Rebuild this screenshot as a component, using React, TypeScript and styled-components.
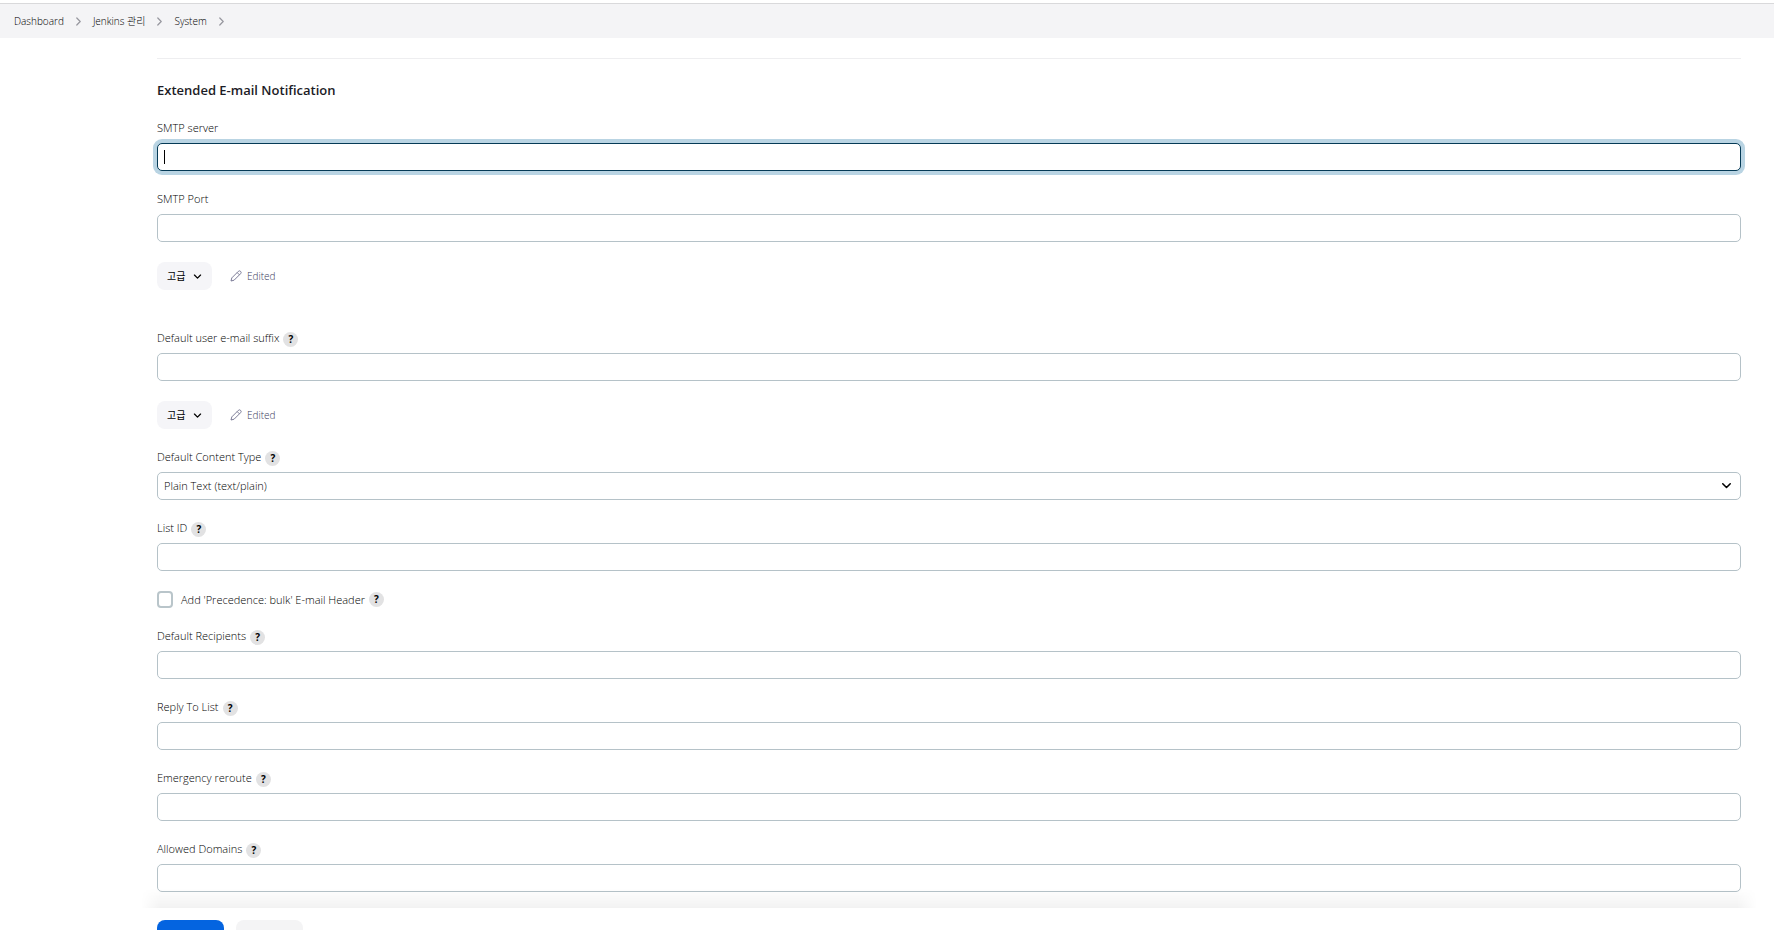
import React from "react";
import styled, { createGlobalStyle } from "styled-components";

const GlobalStyle = createGlobalStyle`
  *, *::before, *::after { box-sizing: border-box; }
  body {
    margin: 0;
    background: #fff;
    color: #000;
    font-family: "Open Sans", "Noto Sans CJK KR", sans-serif;
    font-size: 11px;
    font-weight: 300;
    line-height: 16px;
  }
  button, input, select { font: inherit; color: inherit; }
`;

const Shell = styled.div`
  display: flex;
  flex-direction: column;
  height: 100vh;
  overflow: hidden;
`;

const Breadcrumbs = styled.nav`
  flex: none;
  margin-top: 3px;
  padding: 0 14px;
  border-top: 1px solid #d9d9db;
  background: #f4f4f6;

  ol {
    display: flex;
    align-items: center;
    gap: 12px;
    height: 34px;
    margin: 0;
    padding: 0;
    list-style: none;
  }
  li {
    display: flex;
    align-items: center;
    gap: 12px;
  }
  a {
    color: #000;
    font-size: 10px;
    text-decoration: none;
  }
  svg { color: #96969e; }
`;

const Content = styled.main`
  flex: none;
  margin: 20px 33px 0 157px;
  border-top: 1px solid #eeeef0;
`;

const Heading = styled.h2`
  margin: 21px 0 20px;
  color: #1c1c26;
  font-size: 13px;
  line-height: 20px;
  font-weight: 600;
`;

const Form = styled.form`
  display: flex;
  flex-direction: column;
  gap: 20px;
`;

const LabelRow = styled.div`
  display: flex;
  align-items: flex-end;
  gap: 4px;
  height: 17px;
  margin-bottom: 6px;

  label { line-height: 18px; }
`;

const HelpButton = styled.button`
  display: grid;
  place-items: center;
  width: 15px;
  height: 15px;
  padding: 0;
  border: 0;
  border-radius: 50%;
  background: #e2e2e3;
  font-size: 10px;
  line-height: 15px;
  font-weight: 700;
`;

const TextInput = styled.input`
  display: block;
  width: 100%;
  height: 28px;
  padding: 0 6px;
  border: 1px solid #b5c2c8;
  border-radius: 5px;
  background: #fff;
  outline: none;

  &:focus {
    border-color: #053a56;
    box-shadow: 0 0 0 4px #b9d4e3;
  }
  &:focus:placeholder-shown {
    caret-color: transparent;
    background: linear-gradient(#000, #000) 6px center / 1px 14px no-repeat #fff;
  }
`;

const SelectBox = styled.div`
  position: relative;

  select {
    display: block;
    appearance: none;
    width: 100%;
    height: 28px;
    padding: 0 30px 0 6px;
    border: 1px solid #b5c2c8;
    border-radius: 5px;
    background: #fff;
  }
  svg {
    position: absolute;
    right: 9px;
    top: 8px;
    pointer-events: none;
  }
`;

const AdvancedRow = styled.div<{ $endsBlock?: boolean }>`
  display: flex;
  align-items: center;
  gap: 18px;
  margin-bottom: ${(p) => (p.$endsBlock ? "20px" : "0")};
`;

const AdvancedButton = styled.button`
  display: flex;
  align-items: center;
  justify-content: space-between;
  width: 55px;
  height: 28px;
  padding: 0 10px;
  border: 0;
  border-radius: 8px;
  background: #f5f5f8;
  font-size: 10px;
  font-weight: 400;
  white-space: nowrap;
`;

const EditedNote = styled.span`
  display: flex;
  align-items: center;
  gap: 5px;
  color: #3c3c60;
  font-size: 10px;

  svg { color: #6e6e8c; }
`;

const CheckRow = styled.div`
  display: flex;
  align-items: center;
  gap: 4px;
  height: 17px;

  label {
    display: flex;
    align-items: center;
    gap: 8px;
  }
  input {
    appearance: none;
    width: 16px;
    height: 17px;
    margin: 0;
    border: 2px solid #b9c5ca;
    border-radius: 4px;
    background: #fff;
  }
`;

const ActionBar = styled.footer`
  position: relative;
  flex: none;
  display: flex;
  gap: 12px;
  margin: 16px 17px 0 141px;
  padding: 12px 16px;
  background: #fff;

  &::before {
    content: "";
    position: absolute;
    left: 0;
    right: 0;
    bottom: 100%;
    height: 20px;
    background: linear-gradient(to top, rgba(0, 0, 0, 0.05), transparent);
    mask-image: linear-gradient(to right, transparent, #000 20px, #000 calc(100% - 20px), transparent);
    pointer-events: none;
  }
`;

const ActionButton = styled.button<{ $primary?: boolean }>`
  height: 32px;
  min-width: 67px;
  border: 0;
  border-radius: 8px;
  background: ${(p) => (p.$primary ? "#0464e0" : "#f4f4f5")};
  color: ${(p) => (p.$primary ? "#fff" : "#14141f")};
`;

function ChevronRight() {
  return (
    <svg width="5" height="9" viewBox="0 0 5 9" fill="none" stroke="currentColor"
      strokeWidth="1.2" strokeLinecap="round" strokeLinejoin="round" aria-hidden="true">
      <path d="M.8 1 4.2 4.5.8 8" />
    </svg>
  );
}

function ChevronDown({ size = 9 }: { size?: number }) {
  return (
    <svg width={size} height={size} viewBox="0 0 10 10" fill="none" stroke="currentColor"
      strokeWidth="1.4" strokeLinecap="round" strokeLinejoin="round" aria-hidden="true">
      <path d="M1.6 3.4 5 6.8 8.4 3.4" />
    </svg>
  );
}

function Pencil() {
  return (
    <svg width="12" height="12" viewBox="0 0 12 12" fill="none" stroke="currentColor"
      strokeWidth="0.9" strokeLinejoin="round" aria-hidden="true">
      <path d="M1 11 1.8 7.9 8.3 1.4a1.6 1.6 0 0 1 2.3 2.3L4.1 10.2ZM7.2 2.6 9.4 4.8" />
    </svg>
  );
}

function Help({ topic }: { topic: string }) {
  return <HelpButton type="button" aria-label={`Help for feature: ${topic}`}>?</HelpButton>;
}

function Field({ id, label, help, focused }: { id: string; label: string; help?: boolean; focused?: boolean }) {
  return (
    <div>
      <LabelRow>
        <label htmlFor={id}>{label}</label>
        {help && <Help topic={label} />}
      </LabelRow>
      <TextInput id={id} type="text" placeholder=" " autoFocus={focused} />
    </div>
  );
}

function Advanced({ endsBlock }: { endsBlock?: boolean }) {
  return (
    <AdvancedRow $endsBlock={endsBlock}>
      <AdvancedButton type="button">고급<ChevronDown /></AdvancedButton>
      <EditedNote><Pencil />Edited</EditedNote>
    </AdvancedRow>
  );
}

export default function App() {
  return (
    <Shell>
      <GlobalStyle />
      <Breadcrumbs aria-label="Breadcrumb">
        <ol>
          {["Dashboard", "Jenkins 관리", "System"].map((name) => (
            <li key={name}><a href="#">{name}</a><ChevronRight /></li>
          ))}
        </ol>
      </Breadcrumbs>
      <Content>
        <Heading>Extended E-mail Notification</Heading>
        <Form id="config">
          <Field id="smtp-server" label="SMTP server" focused />
          <Field id="smtp-port" label="SMTP Port" />
          <Advanced endsBlock />
          <Field id="suffix" label="Default user e-mail suffix" help />
          <Advanced />
          <div>
            <LabelRow>
              <label htmlFor="content-type">Default Content Type</label>
              <Help topic="Default Content Type" />
            </LabelRow>
            <SelectBox>
              <select id="content-type">
                <option>Plain Text (text/plain)</option>
              </select>
              <ChevronDown size={11} />
            </SelectBox>
          </div>
          <Field id="list-id" label="List ID" help />
          <CheckRow>
            <label><input type="checkbox" />Add 'Precedence: bulk' E-mail Header</label>
            <Help topic="Precedence" />
          </CheckRow>
          <Field id="recipients" label="Default Recipients" help />
          <Field id="reply-to" label="Reply To List" help />
          <Field id="reroute" label="Emergency reroute" help />
          <Field id="domains" label="Allowed Domains" help />
        </Form>
      </Content>
      <ActionBar>
        <ActionButton form="config" $primary>저장</ActionButton>
        <ActionButton type="button">Apply</ActionButton>
      </ActionBar>
    </Shell>
  );
}
